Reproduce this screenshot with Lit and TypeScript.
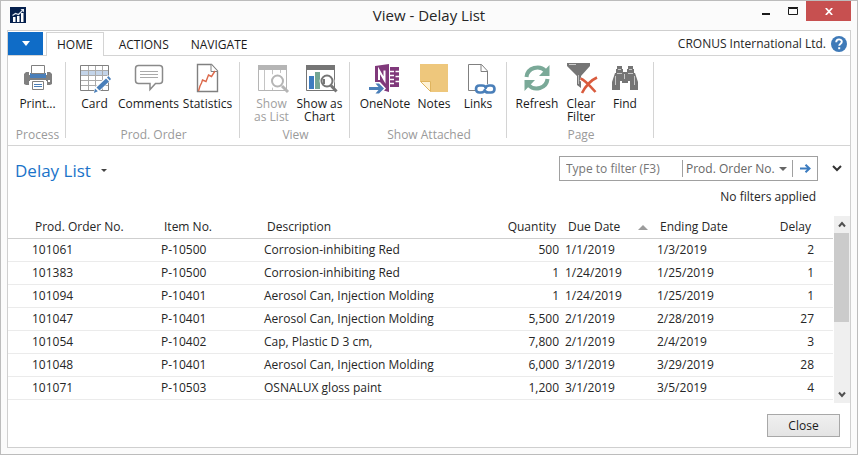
import { LitElement, html, css, svg } from "lit";
import { customElement, property } from "lit/decorators.js";
import { classMap } from "lit/directives/class-map.js";

const icons: Record<string, unknown> = {
  print: svg`
    <path d="M4 10h3v3h18v-3h3l2 2v10l-2 1h-3v-4H7v4H4l-2-1V12z" fill="#808080"/>
    <path d="M8 11h16v5H8z" fill="#4a7fb9"/>
    <path d="M9.500 3.500h13v8h-13z" fill="#fff" stroke="#808080"/>
    <path d="M8 18h16v10H8z" fill="#fff"/>
    <path d="M10.500 19.500h11v8h-11z" fill="#fff" stroke="#808080"/>
    <path d="M12 22.500h8M12 24.500h8" stroke="#4a7fb9"/>
    <path d="M26 18h2v2h-2z" fill="#fff"/>`,
  card: svg`
    <path d="M2 8h28v5H2z" fill="#c3d4e9"/>
    <path d="M9.500 4v24M16.500 4v24M23.500 4v24M2 8.500h28M2 13.500h28M2 18.500h28M2 23.500h28" stroke="#aaa" fill="none"/>
    <path d="M1.500 3.500h28v25h-28z" fill="none" stroke="#808080"/>
    <path d="M14 32l2-7 13-12 4 4-12 12z" fill="#fff"/>
    <path d="M15 31l1-4.500 2.800 2.800z" fill="#4a7fb9"/>
    <path d="M17.500 25.500L27 16.500l3 3-9.500 9z" fill="#4a7fb9"/>
    <path d="M28 15.500l1.500-1.500 2.500 3-1.200 1.500z" fill="#4a7fb9"/>`,
  comments: svg`
    <path d="M5.500 3.500h21q3 0 3 3v12q0 3-3 3h-4l-5.500 6v-6H5.500q-3 0-3-3v-12q0-3 3-3z" fill="#fff" stroke="#8a8a8a" stroke-width="1.500"/>
    <path d="M7 9.500h18M7 12.500h18M7 15.500h18" stroke="#aaa"/>`,
  statistics: svg`
    <path d="M5.500 2.500h14l6 6.500v20.500h-20z" fill="#fff" stroke="#808080" stroke-width="1.400"/>
    <path d="M19 2.500V9.500h6.500" fill="#fff" stroke="#808080"/>
    <path d="M6.500 29l1.500-5 1.500-3 1-3 3.500 1.500 2.500-6.500 3 1.500 3.500-5.500" fill="none" stroke="#dc6a4c" stroke-width="1.400"/>`,
  list: svg`
    <path d="M2 3h29v5H2z" fill="#b5b5b5"/>
    <path d="M2.500 7v21.500h28V7" fill="none" stroke="#b5b5b5"/>
    <path d="M8.500 8v20M16.500 8v6M24.500 8v6M16.500 25v3" stroke="#c4c4c4"/>
    <circle cx="21.500" cy="19" r="6.500" fill="#fff" stroke="#fff" stroke-width="4"/>
    <circle cx="21.500" cy="19" r="5.500" fill="#fff" stroke="#b5b5b5" stroke-width="2"/>
    <path d="M26 24l6 6" stroke="#b5b5b5" stroke-width="3"/>`,
  chart: svg`
    <path d="M2.500 7v21.500h28V7" fill="#fff" stroke="#757575"/>
    <path d="M2 3h29v5H2z" fill="#757575"/>
    <path d="M5 14h5v13H5z" fill="#3c7cc0"/>
    <path d="M11 10h5v17h-5z" fill="#74a694"/>
    <circle cx="23" cy="19" r="7.500" fill="#fff"/>
    <circle cx="23" cy="19" r="5.500" fill="#fff" stroke="#757575" stroke-width="2"/>
    <path d="M19 17h2v5h-2z" fill="#757575"/>
    <path d="M27 23.500l5.500 6" stroke="#757575" stroke-width="3"/>`,
  onenote: svg`
    <path d="M21 5h9v20h-9z" fill="#80397b"/>
    <path d="M21 9.500h4M21 13.500h4M21 17.500h4M21 21.500h4" stroke="#fff" stroke-width="1.500"/>
    <path d="M26.500 9.500h4M26.500 14.500h4M26.500 19.500h4" stroke="#fff" stroke-width="1.500"/>
    <path d="M6 4L20 2v28L6 26z" fill="#80397b"/>
    <path d="M10 18V8.500L15.500 18V8.500" stroke="#fff" stroke-width="2" fill="none"/>
    <path d="M-1 23.500h7l-2-3.500h7l6 6.500-6 6.500H4l2-3.500h-7z" fill="#fff"/>
    <path d="M0 25h9.500l-3-3.500H10l5 5-5 5H6.500l3-3.500H0z" fill="#4a7fb9"/>`,
  notes: svg`
    <path d="M2 2h28v28H13L2 19z" fill="#eec77c"/>
    <path d="M2.500 19.500h10v10z" fill="#fff2d4" stroke="#dfb45f"/>`,
  links: svg`
    <path d="M14 28.500H6.500v-26h13l6 6.500v13" fill="#fff" stroke="#808080"/>
    <path d="M19 2.500V9.500h6.500" fill="none" stroke="#808080"/>
    <g fill="none" stroke-linecap="round" stroke="#4a7fb9" stroke-width="2.600">
      <path d="M22 29.500q-1 1-3 1h-1.500q-3.500 0-3.500-3.500t3.500-3.500H20q3.500 0 3.800 2.500"/>
      <path d="M24.500 24.500q1-1 3-1H29q3.500 0 3.500 3.500T29 30.500h-2.500q-3.500 0-3.800-2.500"/>
    </g>`,
  refresh: svg`
    <g fill="none" stroke="#7aa998" stroke-width="4">
      <path d="M5.500 15C6.500 5.500 18.500 2.500 24.500 9"/>
      <path d="M26.500 17C25.500 26.500 13.500 29.500 7.500 23"/>
    </g>
    <path d="M28.500 3v11H18zM3.500 29V18H14z" fill="#7aa998"/>`,
  clear: svg`
    <path d="M2 1h23v3l-9 10v12l-4-3v-9L2 4z" fill="#757575"/>
    <path d="M4 2.500h7" stroke="#ccc"/>
    <path d="M13.500 13v9" stroke="#bbb"/>
    <g fill="none">
      <path d="M15.500 16.500q3 1 15 13.500M32 15.500q-8 4-15 15.500" stroke="#fff" stroke-width="5"/>
      <path d="M15.500 16.500q4 1 15 13.500M32 15.500q-9 4-15 15.500" stroke="#d95b3d" stroke-width="2.600"/>
    </g>`,
  find: svg`
    <path d="M8 4h5v3h1v3h4V7h1V4h5v3h1v4h1l3 9v8h-8v-9h-2v2h-6v-2h-2v9H3v-8l3-9h1V7h1z" fill="#757575"/>
    <path d="M9 7.500h3M20 7.500h3M8 11.500h5M19 11.500h5M15.500 12v5M6.500 14v9M25.500 14v9" stroke="#c8c8c8"/>`,
};

const icon = (name: string) =>
  html`<svg class="icon" viewBox="0 0 32 32" width="32" height="32" aria-hidden="true">${icons[name]}</svg>`;

interface Command {
  icon: string;
  label: string;
  size: "s" | "m" | "l" | "xl";
  disabled?: boolean;
}

interface Group {
  title: string;
  commands: Command[];
}

const groups: Group[] = [
  { title: "Process", commands: [{ icon: "print", label: "Print...", size: "m" }] },
  {
    title: "Prod. Order",
    commands: [
      { icon: "card", label: "Card", size: "s" },
      { icon: "comments", label: "Comments", size: "xl" },
      { icon: "statistics", label: "Statistics", size: "l" },
    ],
  },
  {
    title: "View",
    commands: [
      { icon: "list", label: "Show\nas List", size: "m", disabled: true },
      { icon: "chart", label: "Show as\nChart", size: "m" },
    ],
  },
  {
    title: "Show Attached",
    commands: [
      { icon: "onenote", label: "OneNote", size: "l" },
      { icon: "notes", label: "Notes", size: "s" },
      { icon: "links", label: "Links", size: "s" },
    ],
  },
  {
    title: "Page",
    commands: [
      { icon: "refresh", label: "Refresh", size: "s" },
      { icon: "clear", label: "Clear\nFilter", size: "s" },
      { icon: "find", label: "Find", size: "s" },
    ],
  },
];

@customElement("ribbon-bar")
export class RibbonBar extends LitElement {
  static styles = css`
    :host {
      display: grid;
      grid-template-columns: 58px 174px 110px 157px 147px 1fr;
      padding: 6px 0 7px;
      border-bottom: 1px solid #d4d4d4;
    }
    .group {
      display: flex;
      flex-direction: column;
      height: 76px;
      padding-left: 2px;
      border-right: 1px solid #d4d4d4;
    }
    .commands {
      flex: 1;
      display: flex;
      justify-content: center;
      align-items: flex-start;
    }
    .command {
      display: flex;
      flex-direction: column;
      align-items: center;
      flex: none;
      padding: 0;
      border: 0;
      background: none;
      font: inherit;
      line-height: 13px;
      color: #1a1a1a;
    }
    .command:disabled {
      color: #a0a0a0;
    }
    .s { width: 44px; }
    .m { width: 48px; }
    .l { width: 54px; }
    .xl { width: 64px; }
    .icon {
      display: block;
      overflow: visible;
      margin-bottom: 3px;
    }
    .label {
      white-space: pre;
    }
    .title {
      line-height: 6px;
      text-align: center;
      color: #9a9a9a;
    }
  `;

  render() {
    return groups.map(
      (g) => html`<div class="group" role="group" aria-label=${g.title}>
        <div class="commands">
          ${g.commands.map(
            (c) => html`<button class=${classMap({ command: true, [c.size]: true })} ?disabled=${c.disabled ?? false}>
              ${icon(c.icon)}<span class="label">${c.label}</span>
            </button>`
          )}
        </div>
        <div class="title">${g.title}</div>
      </div>`
    );
  }
}

interface Order {
  no: string;
  item: string;
  description: string;
  quantity: string;
  due: string;
  ending: string;
  delay: number;
}

const orders: Order[] = [
  ["101061", "P-10500", "Corrosion-inhibiting Red", "500", "1/1/2019", "1/3/2019", 2],
  ["101383", "P-10500", "Corrosion-inhibiting Red", "1", "1/24/2019", "1/25/2019", 1],
  ["101094", "P-10401", "Aerosol Can, Injection Molding", "1", "1/24/2019", "1/25/2019", 1],
  ["101047", "P-10401", "Aerosol Can, Injection Molding", "5,500", "2/1/2019", "2/28/2019", 27],
  ["101054", "P-10402", "Cap, Plastic D 3 cm,", "7,800", "2/1/2019", "2/4/2019", 3],
  ["101048", "P-10401", "Aerosol Can, Injection Molding", "6,000", "3/1/2019", "3/29/2019", 28],
  ["101071", "P-10503", "OSNALUX gloss paint", "1,200", "3/1/2019", "3/5/2019", 4],
].map(([no, item, description, quantity, due, ending, delay]) => ({
  no, item, description, quantity, due, ending, delay,
})) as Order[];

@customElement("order-list")
export class OrderList extends LitElement {
  @property({ attribute: false }) rows: Order[] = [];

  static styles = css`
    :host {
      display: flex;
    }
    .table {
      flex: 1;
      align-self: flex-start;
      width: 100%;
      min-width: 0;
      table-layout: fixed;
      border-collapse: separate;
      border-spacing: 0;
      margin-right: 1px;
    }
    .no { width: 150px; }
    .item { width: 103px; }
    .qty { width: 80px; }
    .due { width: 92px; }
    .ending { width: 103px; }
    .delay { width: 76px; }
    th {
      height: 22px;
      padding: 2px 6px 0;
      border-bottom: 1px solid #cfcfcf;
      font-weight: 400;
      text-align: left;
      line-height: 16px;
      white-space: nowrap;
    }
    td {
      height: 22px;
      padding: 0 3px;
      border-bottom: 1px solid #ebebeb;
      line-height: 16px;
      white-space: nowrap;
    }
    th:first-child { padding-left: 27px; }
    td:first-child { padding-left: 24px; }
    th:last-child { padding-right: 22px; }
    td:last-child { padding-right: 19px; }
    .right { text-align: right; }
    .sorted {
      display: flex;
      align-items: center;
      justify-content: space-between;
    }
    .scroll {
      display: flex;
      flex-direction: column;
      align-items: center;
      width: 16px;
      height: 187px;
      margin-top: 2px;
      background: #efefef;
    }
    .step {
      display: grid;
      place-items: center;
      width: 16px;
      height: 17px;
      padding: 0;
      border: 0;
      background: none;
    }
    .track {
      flex: 1;
      width: 16px;
    }
    .thumb {
      width: 15px;
      height: 89px;
      background: #cbcbcb;
    }
  `;

  render() {
    return html`
      <table class="table">
        <colgroup>
          <col class="no" /><col class="item" /><col /><col class="qty" />
          <col class="due" /><col class="ending" /><col class="delay" />
        </colgroup>
        <thead>
          <tr>
            <th>Prod. Order No.</th>
            <th>Item No.</th>
            <th>Description</th>
            <th class="right">Quantity</th>
            <th aria-sort="ascending">
              <span class="sorted">Due Date
                <svg width="10" height="5" viewBox="0 0 10 5" aria-hidden="true"><path d="M0 5L5 0l5 5z" fill="#9c9c9c"/></svg>
              </span>
            </th>
            <th>Ending Date</th>
            <th class="right">Delay</th>
          </tr>
        </thead>
        <tbody>
          ${this.rows.map(
            (r) => html`<tr>
              <td>${r.no}</td>
              <td>${r.item}</td>
              <td>${r.description}</td>
              <td class="right">${r.quantity}</td>
              <td>${r.due}</td>
              <td>${r.ending}</td>
              <td class="right">${r.delay}</td>
            </tr>`
          )}
        </tbody>
      </table>
      <div class="scroll">
        <button class="step" aria-label="Scroll up">
          <svg width="8" height="7" viewBox="0 0 8 7"><path d="M1 5.500L4 2l3 3.500" fill="none" stroke="#505050" stroke-width="2"/></svg>
        </button>
        <div class="track"><div class="thumb"></div></div>
        <button class="step" aria-label="Scroll down">
          <svg width="8" height="7" viewBox="0 0 8 7"><path d="M1 1.500L4 5l3-3.500" fill="none" stroke="#505050" stroke-width="2"/></svg>
        </button>
      </div>
    `;
  }
}

@customElement("app-root")
export class AppRoot extends LitElement {
  static styles = css`
    :host {
      display: flex;
      flex-direction: column;
      box-sizing: border-box;
      min-height: 100vh;
      padding: 0 6px 6px;
      border: 1px solid #bcbcbc;
      background: #fbfbfb;
      color: #262626;
      font-family: "Open Sans", "Noto Sans", sans-serif;
      font-size: 12px;
      line-height: 16px;
    }
    .titlebar {
      display: grid;
      grid-template-columns: 1fr auto 1fr;
      height: 29px;
    }
    .logo {
      margin: 6px 0 0 3px;
    }
    .caption {
      margin: 0;
      font-size: 15px;
      font-weight: 400;
      line-height: 29px;
    }
    .controls {
      display: flex;
      justify-content: flex-end;
      align-items: flex-start;
    }
    .control {
      display: grid;
      place-items: center;
      width: 27px;
      height: 20px;
      padding: 0;
      border: 0;
      background: none;
    }
    .shut {
      width: 45px;
      background: #c75050;
    }
    .frame {
      flex: 1;
      display: flex;
      flex-direction: column;
      border: 1px solid #cfcfcf;
      background: #fff;
    }
    .tabs {
      display: flex;
      height: 24px;
      padding-top: 1px;
      box-shadow: inset 0 -1px #d4d4d4;
    }
    .menu {
      display: grid;
      place-items: center;
      width: 35px;
      height: 23px;
      margin-right: 3px;
      padding: 0;
      border: 0;
      background: #0f6cc7;
    }
    .tab {
      box-sizing: border-box;
      height: 24px;
      padding: 0 10px;
      border: 1px solid transparent;
      border-bottom: 0;
      background: none;
      font: inherit;
      line-height: 22px;
      color: #1a1a1a;
    }
    .active {
      margin-right: 4px;
      border-color: #d4d4d4;
      background: #fff;
    }
    .company {
      display: flex;
      align-items: center;
      gap: 5px;
      margin-left: auto;
      padding-right: 3px;
    }
    .help {
      display: block;
      padding: 0;
      border: 0;
      background: none;
      line-height: 0;
    }
    .head {
      display: flex;
      align-items: flex-start;
      justify-content: space-between;
      padding: 10px 8px 0 7px;
    }
    .heading {
      display: flex;
      align-items: center;
      gap: 10px;
      margin: 4px 0 0;
      font-size: 17px;
      font-weight: 400;
      line-height: 21px;
      color: #1a73c9;
    }
    .tools {
      display: flex;
      align-items: center;
      gap: 14px;
    }
    .filter {
      display: flex;
      align-items: center;
      box-sizing: border-box;
      width: 259px;
      height: 25px;
      border: 1px solid #a0a0a0;
    }
    .query {
      flex: 1;
      min-width: 0;
      padding: 0 6px;
      border: 0;
      outline: 0;
      font: inherit;
      color: #262626;
    }
    .query::placeholder {
      color: #767676;
      opacity: 1;
    }
    .field {
      display: grid;
      grid-template-columns: 1fr 8px;
      align-items: center;
      width: 104px;
      height: 17px;
      padding-right: 5px;
      border: 1px solid #a0a0a0;
      border-width: 0 1px;
    }
    .select {
      grid-area: 1 / 1 / 2 / 3;
      padding: 0 0 0 3px;
      border: 0;
      appearance: none;
      background: none;
      font: inherit;
      color: #666;
    }
    .arrow {
      grid-area: 1 / 2;
      pointer-events: none;
    }
    .go,
    .expand {
      display: grid;
      place-items: center;
      width: 24px;
      padding: 0;
      border: 0;
      background: none;
    }
    .expand {
      width: 10px;
    }
    .status {
      margin: 8px 34px 9px;
      text-align: right;
    }
    .footer {
      display: flex;
      justify-content: flex-end;
      padding: 11px 10px 10px;
    }
    .close {
      box-sizing: border-box;
      width: 73px;
      height: 23px;
      padding: 0;
      border: 1px solid #a8a8a8;
      background: linear-gradient(#f0f0f0, #e4e4e4);
      font: inherit;
      line-height: 20px;
      color: #1a1a1a;
    }
  `;

  render() {
    return html`
      <header class="titlebar">
        <svg class="logo" width="16" height="16" viewBox="0 0 16 16" aria-hidden="true">
          <path d="M0 0h16v16H0z" fill="#05204d"/>
          <path d="M3 10h2.500v5H3zM7 9h2.500v6H7zM11 6h2.500v9H11z" fill="#fff"/>
          <path d="M2.500 8.500l3-2 3 1 4-4" fill="none" stroke="#dfe6ef" stroke-width="1.300"/>
          <path d="M10.500 2h3.500v3.500z" fill="#dfe6ef"/>
        </svg>
        <h1 class="caption">View - Delay List</h1>
        <div class="controls">
          <button class="control" aria-label="Minimize">
            <svg width="8" height="8"><path d="M0 6h8v2H0z" fill="#1a1a1a"/></svg>
          </button>
          <button class="control" aria-label="Maximize">
            <svg width="10" height="8"><path d="M.5 1.500h9v6h-9zM0 .5h10" fill="none" stroke="#1a1a1a"/></svg>
          </button>
          <button class="control shut" aria-label="Close window">
            <svg width="8" height="7"><path d="M.8 0l6.400 7M7.200 0L.8 7" stroke="#fff" stroke-width="1.700"/></svg>
          </button>
        </div>
      </header>
      <main class="frame">
        <nav class="tabs">
          <button class="menu" aria-label="Application menu">
            <svg width="8" height="5"><path d="M0 0h8L4 5z" fill="#fff"/></svg>
          </button>
          <button class="tab active">HOME</button>
          <button class="tab">ACTIONS</button>
          <button class="tab">NAVIGATE</button>
          <div class="company">
            CRONUS International Ltd.
            <button class="help" aria-label="Help">
              <svg width="16" height="16" viewBox="0 0 16 16">
                <circle cx="8" cy="8" r="8" fill="#3f7ab8"/>
                <path d="M5.200 6.200c0-3.800 5.600-3.600 5.600-.5 0 2-2.600 1.900-2.600 4.100" fill="none" stroke="#fff" stroke-width="1.900"/>
                <path d="M7.200 11.200h2v2h-2z" fill="#fff"/>
              </svg>
            </button>
          </div>
        </nav>
        <ribbon-bar></ribbon-bar>
        <section class="head">
          <h2 class="heading">
            Delay List
            <svg width="6" height="3" aria-hidden="true"><path d="M0 0h6L3 3z" fill="#444"/></svg>
          </h2>
          <div class="tools">
            <div class="filter">
              <input class="query" type="text" placeholder="Type to filter (F3)" aria-label="Type to filter" />
              <div class="field">
                <select class="select" aria-label="Filter field">
                  <option>Prod. Order No.</option>
                </select>
                <svg class="arrow" width="8" height="4"><path d="M0 0h8L4 4z" fill="#666"/></svg>
              </div>
              <button class="go" aria-label="Apply filter">
                <svg width="11" height="9" viewBox="0 0 11 9"><path d="M0 4.500h9M5.500.7l4 3.800-4 3.800" fill="none" stroke="#3c7cc0" stroke-width="2"/></svg>
              </button>
            </div>
            <button class="expand" aria-label="Show filters">
              <svg width="10" height="7"><path d="M1 1l4 4 4-4" fill="none" stroke="#333" stroke-width="2"/></svg>
            </button>
          </div>
        </section>
        <p class="status">No filters applied</p>
        <order-list .rows=${orders}></order-list>
        <footer class="footer"><button class="close">Close</button></footer>
      </main>
    `;
  }
}
